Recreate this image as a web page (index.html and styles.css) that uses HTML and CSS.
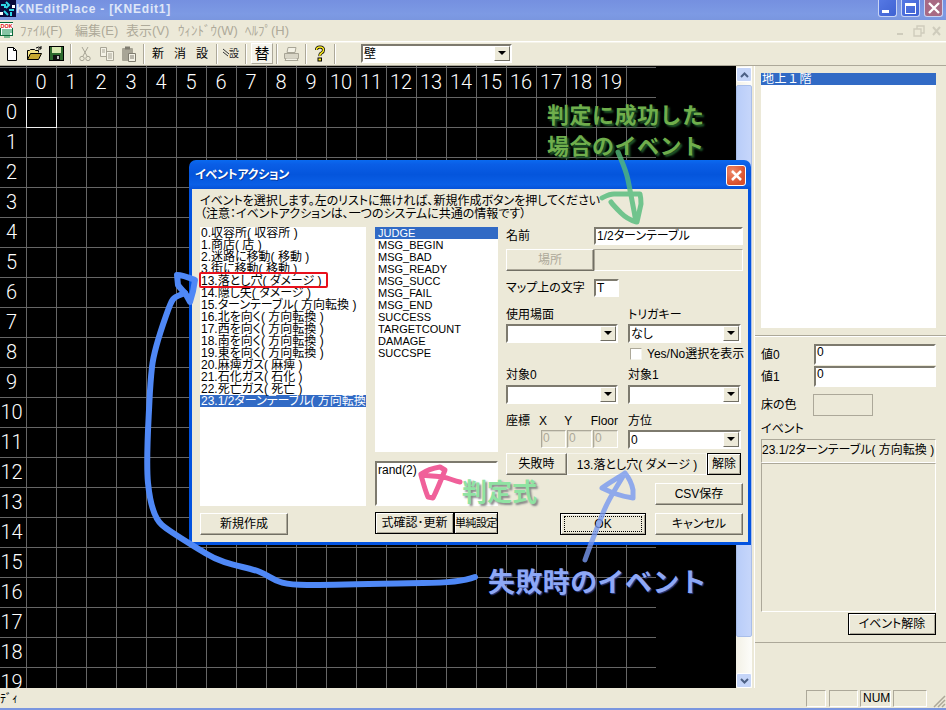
FILE: index.html
```html
<!DOCTYPE html>
<html lang="ja">

<head>
    <meta charset="UTF-8">
    <title>KNEditPlace - [KNEdit1]</title>
    <link rel="stylesheet" href="styles.css">
</head>

<body>

    <div class="app">

        <div class="titlebar">
            <svg class="app-icon" width="16" height="17" viewBox="0 0 16 17">
                <rect width="16" height="17" fill="#0a0a3c"/>
                <path d="M1 5h4v3M6 2l3 3-3 3M9 10h5M4 11l4 4M11 12v4" stroke="#2fd8e8" stroke-width="2" fill="none"/>
                <rect x="0" y="12" width="3" height="3" fill="#fff"/>
                <rect x="12" y="5" width="3" height="3" fill="#fff"/>
            </svg>
            <span class="title-text">KNEditPlace - [KNEdit1]</span>
            <div class="win-btns">
                <div class="win-btn"><span class="glyph-min"></span></div>
                <div class="win-btn"><span class="glyph-max"></span></div>
                <div class="win-btn win-close">
                    <svg width="14" height="14" viewBox="0 0 14 14"><path d="M2 2l10 10M12 2L2 12" stroke="#fff" stroke-width="2.4"/></svg>
                </div>
            </div>
        </div>

        <div class="menubar">
            <svg class="doc-icon" width="14" height="17" viewBox="0 0 14 17">
                <rect x="0.5" y="0.5" width="12" height="13" fill="#fff" stroke="#0a6a3a"/>
                <rect x="0" y="1" width="13" height="5" fill="#fff"/>
                <text x="0.5" y="6" font-size="5.5" font-weight="700" font-family="Liberation Sans" fill="#e01010">DOK</text>
                <path d="M2 8h10M2 10h10M2 12h8M4 15h6" stroke="#0a8a4a"/>
            </svg>
            <span class="menu-item m1">ﾌｧｲﾙ(F)</span>
            <span class="menu-item m2">編集(E)</span>
            <span class="menu-item m3">表示(V)</span>
            <span class="menu-item m4">ｳｨﾝﾄﾞｳ(W)</span>
            <span class="menu-item m5">ﾍﾙﾌﾟ(H)</span>
            <div class="mdi-btns">
                <svg width="50" height="16" viewBox="0 0 50 16">
                    <path d="M4 11h6" stroke="#cfccbc" stroke-width="2"/>
                    <path d="M21 6h7v7h-7zM24 6V3h7v7h-3" stroke="#cfccbc" stroke-width="1.4" fill="none"/>
                    <path d="M40 4l7 8M47 4l-7 8" stroke="#cfccbc" stroke-width="2"/>
                </svg>
            </div>
        </div>

        <div class="toolbar">
            <div class="tool">
                <svg width="16" height="16" viewBox="0 0 16 16"><path d="M3.5 1.5h6l3 3v10h-9z" fill="#fff" stroke="#000"/><path d="M9.5 1.5v3h3" fill="none" stroke="#000"/></svg>
            </div>
            <div class="tool">
                <svg width="17" height="16" viewBox="0 0 17 16"><path d="M1.5 13.5v-9h2l1-1h4l1 1h3v2" fill="#f4e48a" stroke="#000"/><path d="M1.5 13.5l3-6h11l-3 6z" fill="#c8a830" stroke="#000"/><path d="M10 2q3-2 5 0M15 0v3h-3" fill="none" stroke="#000"/></svg>
            </div>
            <div class="tool">
                <svg width="15" height="15" viewBox="0 0 15 15"><rect x="0.5" y="0.5" width="14" height="14" fill="#2e6a2e" stroke="#000"/><rect x="3" y="1" width="9" height="6" fill="#d8e8b0"/><rect x="4" y="9" width="7" height="5" fill="#111"/><rect x="8" y="10" width="2" height="3" fill="#bbb"/></svg>
            </div>
            <div class="tool-sep"></div>
            <div class="tool">
                <svg width="12" height="16" viewBox="0 0 12 16"><path d="M3 1l5 9M9 1l-5 9" stroke="#a8a596" fill="none"/><circle cx="3" cy="12.5" r="2.2" fill="none" stroke="#a8a596"/><circle cx="9" cy="12.5" r="2.2" fill="none" stroke="#a8a596"/></svg>
            </div>
            <div class="tool">
                <svg width="16" height="15" viewBox="0 0 16 15"><path d="M1.5 1.5h6v9h-6zM7.5 5.5h7v9h-7z" fill="#f4f2e6" stroke="#a8a596"/><path d="M3 4h3M3 6h3M9 8h4M9 10h4M9 12h4" stroke="#a8a596"/></svg>
            </div>
            <div class="tool">
                <svg width="16" height="16" viewBox="0 0 16 16"><rect x="1" y="2" width="11" height="13" rx="1" fill="#a8a596"/><rect x="4" y="0.5" width="5" height="3" fill="#807d70"/><path d="M7.5 7.5h7v8h-7z" fill="#f4f2e6" stroke="#807d70"/><path d="M9 10h4M9 12h4" stroke="#807d70"/></svg>
            </div>
            <div class="tool-sep"></div>
            <div class="tool">新</div>
            <div class="tool">消</div>
            <div class="tool">設</div>
            <div class="tool-sep"></div>
            <div class="tool tool-config">
                <svg width="6" height="12" viewBox="0 0 6 12"><path d="M0 1l6 5M0 4l5 4" stroke="#333"/></svg>
                <span>設</span>
            </div>
            <div class="tool-sep"></div>
            <div class="tool tool-on">替</div>
            <div class="tool-sep"></div>
            <div class="tool">
                <svg width="17" height="16" viewBox="0 0 17 16"><path d="M5 1.5h8l-1 5H4z" fill="#f4f2e6" stroke="#a8a596"/><path d="M1.5 7.5h14v5h-14z" fill="#d8d5c6" stroke="#a8a596"/><path d="M3 12.5l-1 2h13l-1-2" fill="#f4f2e6" stroke="#a8a596"/></svg>
            </div>
            <div class="tool-sep"></div>
            <div class="tool">
                <svg width="12" height="17" viewBox="0 0 12 17"><path d="M2.5 5q0-3 3.500-3t3.500 3q0 2-2 3t-1.500 3" fill="none" stroke="#000" stroke-width="3"/><path d="M2.500 5q0-3 3.500-3t3.500 3q0 2-2 3t-1.500 3" fill="none" stroke="#f8e820" stroke-width="1.500"/><rect x="4" y="13" width="3.500" height="3" fill="#f8e820" stroke="#000"/></svg>
            </div>
            <div class="tool-sep"></div>
            <div class="combo tool-combo">
                <span class="combo-text">壁</span>
                <span class="combo-arrow"></span>
            </div>
        </div>

        <div class="main">
            <div class="map">
                <div class="map-rows">
                    <span>0</span><span>1</span><span>2</span><span>3</span><span>4</span>
                    <span>5</span><span>6</span><span>7</span><span>8</span><span>9</span>
                    <span>10</span><span>11</span><span>12</span><span>13</span><span>14</span>
                    <span>15</span><span>16</span><span>17</span><span>18</span><span>19</span>
                </div>
                <div class="map-grid">
                    <div class="map-cols">
                        <span>0</span><span>1</span><span>2</span><span>3</span><span>4</span>
                        <span>5</span><span>6</span><span>7</span><span>8</span><span>9</span>
                        <span>10</span><span>11</span><span>12</span><span>13</span><span>14</span>
                        <span>15</span><span>16</span><span>17</span><span>18</span><span>19</span>
                    </div>
                    <div class="map-cursor"></div>
                </div>
            </div>

            <div class="scroll">
                <div class="scroll-btn">
                    <svg width="9" height="6" viewBox="0 0 9 6"><path d="M1 5l3.500-3.500L8 5" fill="none" stroke="#4d6185" stroke-width="2"/></svg>
                </div>
                <div class="scroll-thumb"></div>
                <div class="scroll-track"></div>
                <div class="scroll-btn">
                    <svg width="9" height="6" viewBox="0 0 9 6"><path d="M1 1l3.500 3.500L8 1" fill="none" stroke="#4d6185" stroke-width="2"/></svg>
                </div>
            </div>

            <div class="side">
                <div class="side-top">
                    <div class="list floor-list">
                        <div class="sel">地上１階</div>
                    </div>
                </div>
                <div class="side-bottom">
                    <div class="value-row"><label>値0</label><div class="field value-field">0</div></div>
                    <div class="value-row"><label>値1</label><div class="field value-field">0</div></div>
                    <div class="floor-row"><label>床の色</label><div class="swatch"></div></div>
                    <div class="event-title">イベント</div>
                    <div class="flat-box event-name">23.1/2ターンテーブル( 方向転換 )</div>
                    <div class="flat-box event-body"></div>
                    <div class="event-actions"><div class="btn btn-black event-clear">イベント解除</div></div>
                </div>
            </div>
        </div>

        <div class="statusbar">
            <span class="status-text">ﾃﾞｨ</span>
            <div class="status-cell s1"></div>
            <div class="status-cell s2"></div>
            <div class="status-cell s3">NUM</div>
            <div class="status-cell s4"></div>
            <svg class="grip" width="14" height="14" viewBox="0 0 14 14"><path d="M13 2L2 13M13 6l-7 7M13 10l-3 3" stroke="#aca899" stroke-width="1.500"/></svg>
        </div>
        <div class="bottom-line"></div>

    </div>

    <div class="dialog">
        <div class="dlg-title">
            <span>イベントアクション</span>
            <div class="dlg-close">
                <svg width="13" height="13" viewBox="0 0 13 13"><path d="M2 2l9 9M11 2l-9 9" stroke="#fff" stroke-width="2.500"/></svg>
            </div>
        </div>
        <div class="dlg-body">
            <p class="dlg-note">イベントを選択します。左のリストに無ければ、新規作成ボタンを押してください<br>（注意：イベントアクションは、一つのシステムに共通の情報です）</p>
            <div class="dlg-cols">
                <div class="col-left">
                    <div class="list event-list">
                        <div>0.収容所( 収容所 )</div>
                        <div>1.商店( 店 )</div>
                        <div>2.迷路に移動( 移動 )</div>
                        <div>3.街に移動( 移動 )</div>
                        <div>13.落とし穴( ダメージ )</div>
                        <div>14.隠し矢( ダメージ )</div>
                        <div>15.ターンテーブル( 方向転換 )</div>
                        <div>16.北を向く( 方向転換 )</div>
                        <div>17.西を向く( 方向転換 )</div>
                        <div>18.南を向く( 方向転換 )</div>
                        <div>19.東を向く( 方向転換 )</div>
                        <div>20.麻痺ガス( 麻痺 )</div>
                        <div>21.石化ガス( 石化 )</div>
                        <div>22.死亡ガス( 死亡 )</div>
                        <div class="sel">23.1/2ターンテーブル( 方向転換 )</div>
                    </div>
                    <div class="btn new-btn">新規作成</div>
                </div>

                <div class="col-mid">
                    <div class="list msg-list">
                        <div class="sel">JUDGE</div>
                        <div>MSG_BEGIN</div>
                        <div>MSG_BAD</div>
                        <div>MSG_READY</div>
                        <div>MSG_SUCC</div>
                        <div>MSG_FAIL</div>
                        <div>MSG_END</div>
                        <div>SUCCESS</div>
                        <div>TARGETCOUNT</div>
                        <div>DAMAGE</div>
                        <div>SUCCSPE</div>
                    </div>
                    <div class="field formula">rand(2)</div>
                    <div class="mid-btns">
                        <div class="btn btn-black check-btn">式確認･更新</div>
                        <div class="btn btn-black simple-btn">単純設定</div>
                    </div>
                </div>

                <div class="col-form">
                    <div class="name-row">
                        <label>名前</label>
                        <div class="field name-field">1/2ターンテーブル</div>
                    </div>
                    <div class="place-row">
                        <div class="btn btn-off place-btn">場所</div>
                        <div class="flat-box place-field"></div>
                    </div>
                    <div class="mark-row">
                        <label>マップ上の文字</label>
                        <div class="field mark-field">T</div>
                    </div>

                    <div class="pair labels first-labels"><label>使用場面</label><label>トリガキー</label></div>
                    <div class="pair">
                        <div class="combo"><span class="combo-text"></span><span class="combo-arrow"></span></div>
                        <div class="combo"><span class="combo-text">なし</span><span class="combo-arrow"></span></div>
                    </div>
                    <div class="pair check-row">
                        <div></div>
                        <div class="check-wrap"><span class="checkbox"></span><span>Yes/No選択を表示</span></div>
                    </div>
                    <div class="pair labels target-labels"><label>対象0</label><label>対象1</label></div>
                    <div class="pair">
                        <div class="combo"><span class="combo-text"></span><span class="combo-arrow"></span></div>
                        <div class="combo"><span class="combo-text"></span><span class="combo-arrow"></span></div>
                    </div>

                    <div class="pair labels coord-labels">
                        <div class="coord-names"><label class="c0">座標</label><label class="c1">X</label><label class="c2">Y</label><label class="c3">Floor</label></div>
                        <label>方位</label>
                    </div>
                    <div class="pair">
                        <div class="coords">
                            <div class="field field-off">0</div>
                            <div class="field field-off">0</div>
                            <div class="field field-off">0</div>
                        </div>
                        <div class="combo"><span class="combo-text">0</span><span class="combo-arrow"></span></div>
                    </div>

                    <div class="fail-row">
                        <div class="btn fail-btn">失敗時</div>
                        <div class="fail-name">13.落とし穴( ダメージ )</div>
                        <div class="btn btn-black clear-btn">解除</div>
                    </div>
                    <div class="csv-row"><div class="btn dlg-btn">CSV保存</div></div>
                    <div class="ok-row">
                        <div class="btn btn-black ok-btn"><span>OK</span></div>
                        <div class="btn dlg-btn">キャンセル</div>
                    </div>
                </div>
            </div>
        </div>
    </div>

    <!-- 手書きの注釈 -->
    <div class="notes">
        <svg width="946" height="710" viewBox="0 0 946 710">
            <rect x="200" y="273" width="127" height="14" rx="1" fill="none" stroke="#e8101c" stroke-width="2"/>
            <g fill="none" stroke-linecap="round" stroke-linejoin="round">
                <path class="ink-green" d="M618 152C622 162 626 170 628 180S633 205 636 222C630 220 626 218 621 213S613 205 611 202M602 198C606 196 609 194 614 194L640 194C641 198 641 200 641 204L637 222"/>
                <path class="ink-pink" d="M421 474C427 470 434 468 440 467L445 470C441 480 437 490 433 498L428 497C425 490 423 482 421 475C430 476 437 476 443 477S454 481 460 482"/>
                <path class="ink-blue" d="M475 577C462 582 440 583 423 583S340 585 307 585S275 578 260 572S226 566 205 553S170 532 162 525S150 503 148 483S148 430 149 410S150 385 152 367S161 330 167 313S173 298 185 293"/>
                <path class="ink-blue" d="M177 275C183 275 190 278 195 280C194 288 192 296 190 302C188 298 187 296 185 293C182 290 180 288 178 285Z"/>
                <path class="ink-light" d="M585 560C591 543 597 528 603 513S612 495 625 473M602 488C610 482 618 478 625 473C629 478 632 484 633 490L633 498C626 497 619 495 613 493Z"/>
            </g>
        </svg>
        <div class="note note-success">判定に成功した<br>場合のイベント</div>
        <div class="note note-formula">判定式</div>
        <div class="note note-fail">失敗時のイベント</div>
    </div>

</body>

</html>
```

FILE: styles.css
```css
* {
    box-sizing: border-box;
}

body {
    margin: 0;
    width: 946px;
    height: 710px;
    overflow: hidden;
    position: relative;
    background-color: #ece9d8;
    color: #000;
    font-family: "Liberation Sans", "Noto Sans CJK JP", sans-serif;
    font-size: 12px;
    line-height: 12px;
    font-feature-settings: "palt";
}

label {
    display: block;
    white-space: nowrap;
}

.app {
    display: flex;
    flex-direction: column;
    height: 710px;
}

/* タイトルバー */
.titlebar {
    display: flex;
    align-items: flex-start;
    height: 20px;
    background: linear-gradient(#7590e0, #7d9ae4 70%, #7a96df);
}

.app-icon {
    flex: none;
}

.title-text {
    margin: 2px 0 0 0;
    color: #dfe6f8;
    font-size: 12px;
    line-height: 14px;
    font-weight: 700;
    letter-spacing: 0.8px;
}

.win-btns {
    display: flex;
    gap: 4px;
    margin-left: auto;
    margin-right: 3px;
}

.win-btn {
    display: flex;
    align-items: center;
    justify-content: center;
    width: 19px;
    height: 17px;
    border: 1px solid #c8d4f4;
    border-top: none;
    border-radius: 0 0 3px 3px;
    background: linear-gradient(135deg, #5578e4, #3f62d2);
    position: relative;
}

.win-close {
    background: #a86a84;
}

.glyph-min {
    width: 7px;
    height: 3px;
    background: #fff;
    margin: 7px 4px 0 0;
}

.glyph-max {
    width: 11px;
    height: 11px;
    border: 1px solid #fff;
    border-top-width: 3px;
}

/* メニュー */
.menubar {
    display: flex;
    align-items: center;
    height: 21px;
    position: relative;
}

.doc-icon {
    flex: none;
}

.menu-item {
    color: #aeaa9a;
    font-size: 13px;
    white-space: nowrap;
    flex: none;
}

.m1 { margin-left: 6px; width: 55px; }
.m2 { width: 51px; }
.m3 { width: 52px; }
.m4 { width: 67px; }
.m5 { width: 40px; }

.mdi-btns {
    margin-left: auto;
    margin-right: 3px;
    height: 16px;
}

/* ツールバー */
.toolbar {
    display: flex;
    align-items: center;
    height: 25px;
    padding-left: 1px;
    border-top: 1px solid #fff;
    border-bottom: 1px solid #aca899;
    box-shadow: inset 0 1px 0 #f5f3e8;
    background: #ece9d8;
    font-size: 12px;
}

.tool {
    display: flex;
    align-items: center;
    justify-content: center;
    flex: none;
    width: 22px;
    height: 21px;
}

.tool-sep {
    flex: none;
    width: 2px;
    height: 20px;
    margin: 0 2px 0 3px;
    border-left: 1px solid #aca899;
    border-right: 1px solid #fff;
}

.tool-config {
    font-size: 10px;
    color: #222;
}

.tool-on {
    margin-left: 2px;
    border: 1px solid #fff;
    border-right-color: #aca899;
    border-bottom-color: #aca899;
    background: #f5f4ec;
    font-size: 15px;
}

.tool-combo {
    width: 151px;
    margin-left: 23px;
}

/* コンボボックス */
.combo {
    display: flex;
    align-items: center;
    height: 19px;
    background: #fff;
    border: 2px solid;
    border-color: #7d7a6e #fff #fff #7d7a6e;
    outline: 0;
}

.combo-text {
    flex: 1;
    padding-left: 1px;
    white-space: nowrap;
}

.combo-arrow {
    flex: none;
    width: 16px;
    height: 15px;
    background: #ece9d8;
    border: 1px solid;
    border-color: #fff #716f64 #716f64 #fff;
    position: relative;
}

.combo-arrow::after {
    content: "";
    position: absolute;
    left: 3px;
    top: 4px;
    border: 4px solid transparent;
    border-top: 4px solid #000;
    border-bottom: 0;
}

/* マップ */
.main {
    display: flex;
    height: 622px;
}

.map {
    display: flex;
    width: 736px;
    flex: none;
    overflow: hidden;
    background-color: #000;
    background-image: linear-gradient(#666, #666 1px, transparent 1px);
    background-size: 656px 30px;
    background-position: 0 1px;
    background-repeat: repeat-y;
    color: #fff;
    font-family: Roboto, "Liberation Sans", sans-serif;
    font-weight: 300;
    font-size: 20px;
    line-height: 30px;
}

.map-rows {
    display: flex;
    flex-direction: column;
    flex: none;
    width: 26px;
    padding-top: 31px;
    text-align: center;
}

.map-rows span {
    display: block;
    height: 30px;
    width: 23px;
}

.map-grid {
    width: 601px;
    height: 622px;
    flex: none;
    background-image: linear-gradient(to right, #666, #666 1px, transparent 1px);
    background-size: 30px 100%;
}

.map-cols {
    display: flex;
    height: 31px;
    padding-top: 1px;
}

.map-cols span {
    width: 30px;
    text-align: center;
    flex: none;
}

.map-cursor {
    width: 31px;
    height: 31px;
    border: 1px solid #eee;
}

/* スクロールバー */
.scroll {
    display: flex;
    flex-direction: column;
    flex: none;
    width: 16px;
    background: linear-gradient(to right, #f3f1e6, #fdfdfa);
    padding-top: 1px;
}

.scroll-btn {
    display: flex;
    align-items: center;
    justify-content: center;
    height: 15px;
    flex: none;
    background: #c5d5f8;
    border: 1px solid #fff;
    border-radius: 2px;
}

.scroll-thumb {
    height: 552px;
    margin-top: 3px;
    flex: none;
    background: linear-gradient(to right, #b9cdf9, #c6d6fb);
    border: 1px solid #a9bee9;
    border-radius: 2px;
}

.scroll-track {
    flex: 1;
}

/* 右パネル */
.side {
    display: flex;
    flex-direction: column;
    flex: 1;
    margin-left: 2px;
    border-left: 1px solid #fff;
}

.side-top {
    height: 270px;
    padding: 7px 0 0 6px;
    border-bottom: 1px solid #aca899;
}

.list {
    background: #fff;
    overflow: hidden;
    white-space: nowrap;
}

.list .sel {
    background: #316ac5;
    color: #fff;
}

.list div {
    height: 12px;
    padding-left: 1px;
}

.floor-list {
    width: 175px;
    height: 255px;
    font-feature-settings: normal;
    letter-spacing: 0.5px;
}

.side-bottom {
    height: 307px;
    padding: 7px 0 0 6px;
    border-top: 1px solid #fff;
    border-bottom: 1px solid #aca899;
}

.value-row {
    display: flex;
    align-items: center;
    margin-bottom: 1px;
}

.value-row label {
    width: 53px;
}

.field {
    background: #fff;
    border: 2px solid;
    border-color: #7d7a6e #fff #fff #7d7a6e;
    white-space: nowrap;
}

.value-field {
    width: 122px;
    height: 21px;
    padding-left: 1px;
}

.floor-row {
    display: flex;
    align-items: center;
    margin-top: 7px;
}

.floor-row label {
    width: 52px;
}

.swatch {
    width: 60px;
    height: 22px;
    border: 1px solid #aca899;
}

.event-title {
    margin-top: 7px;
}

.flat-box {
    border: 1px solid;
    border-color: #aca899 #fff #fff #aca899;
}

.event-name {
    width: 175px;
    height: 24px;
    margin-top: 4px;
    line-height: 20px;
    white-space: nowrap;
    overflow: hidden;
}

.event-body {
    width: 175px;
    height: 149px;
}

.event-actions {
    display: flex;
    justify-content: flex-end;
    width: 175px;
    margin-top: 1px;
}

.event-clear {
    width: 88px;
    height: 23px;
}

/* ボタン */
.btn {
    display: flex;
    align-items: center;
    justify-content: center;
    flex: none;
    height: 22px;
    white-space: nowrap;
    background: #ece9d8;
    border: 1px solid;
    border-color: #fff #716f64 #716f64 #fff;
    box-shadow: inset -1px -1px 0 #aca899;
}

.btn-black {
    border-color: #000;
    box-shadow: inset 1px 1px 0 #fff, inset -1px -1px 0 #aca899;
}

.btn-off {
    color: #aca899;
}

/* ステータスバー */
.statusbar {
    display: flex;
    align-items: flex-end;
    height: 20px;
    position: relative;
    padding-top: 1px;
}

.status-text {
    position: absolute;
    left: 0;
    top: 5px;
}

.status-cell {
    height: 17px;
    border: 1px solid;
    border-color: #aca899 #fff #fff #aca899;
    line-height: 15px;
    padding-left: 2px;
    margin-bottom: 1px;
    flex: none;
}

.s1 { width: 20px; margin-left: 806px; }
.s2 { width: 29px; margin-left: 3px; }
.s3 { width: 31px; margin-left: 2px; }
.s4 { width: 34px; margin-left: 2px; }

.grip {
    margin-left: auto;
    flex: none;
}

.bottom-line {
    height: 2px;
    background: #7a96df;
}

/* ダイアログ */
.dialog {
    position: absolute;
    left: 189px;
    top: 160px;
    width: 562px;
    height: 385px;
    display: flex;
    flex-direction: column;
}

.dlg-title {
    display: flex;
    align-items: center;
    height: 29px;
    padding: 1px 5px 0 6px;
    border-radius: 7px 7px 0 0;
    background: linear-gradient(#0a6af0, #0a5ee6 15%, #0455dc 50%, #0a5fe6 85%, #0652d8);
    color: #fff;
    font-size: 12px;
    font-weight: 700;
    letter-spacing: -0.3px;
    text-shadow: 1px 1px 0 #0a3ca0;
}

.dlg-close {
    display: flex;
    align-items: center;
    justify-content: center;
    width: 20px;
    height: 21px;
    margin-left: auto;
    border: 1px solid #fff;
    border-radius: 3px;
    background: radial-gradient(circle at 30% 30%, #ee8a6a, #d8502c 70%);
}

.dlg-body {
    flex: 1;
    background: #ece9d8;
    border: 3px solid #0353e0;
    border-top: none;
    padding: 6px 8px 0 8px;
}

.dlg-note {
    margin: 0 0 6px 0;
    height: 26px;
    line-height: 13px;
    white-space: nowrap;
}

.dlg-cols {
    display: flex;
}

.col-left {
    width: 166px;
    flex: none;
}

.event-list {
    height: 279px;
}

.new-btn {
    width: 88px;
    margin-top: 7px;
}

.col-mid {
    width: 123px;
    margin-left: 9px;
    flex: none;
}

.msg-list {
    height: 225px;
    font-size: 11px;
}

.msg-list div {
    padding-left: 3px;
}

.formula {
    height: 45px;
    margin-top: 9px;
    padding: 1px;
}

.mid-btns {
    display: flex;
    margin-top: 6px;
}

.check-btn {
    width: 79px;
}

.simple-btn {
    width: 44px;
    font-size: 11px;
    letter-spacing: -0.5px;
    overflow: hidden;
}

.col-form {
    width: 237px;
    margin-left: 8px;
    flex: none;
}

.name-row,
.mark-row {
    display: flex;
    align-items: center;
}

.name-row label,
.mark-row label {
    width: 88px;
}

.name-field {
    width: 149px;
    height: 18px;
    padding-left: 1px;
    line-height: 14px;
}

.place-row {
    display: flex;
    margin-top: 4px;
}

.place-btn {
    width: 88px;
}

.place-field {
    width: 149px;
    height: 22px;
}

.mark-row {
    margin-top: 8px;
}

.mark-field {
    width: 25px;
    height: 18px;
    padding-left: 1px;
    line-height: 14px;
}

.pair {
    display: grid;
    grid-template-columns: 112px 113px;
    column-gap: 10px;
}

.first-labels {
    margin-top: 12px;
    margin-bottom: 3px;
}

.check-row {
    margin-top: 5px;
}

.check-wrap {
    display: flex;
    align-items: center;
    white-space: nowrap;
    padding-left: 2px;
    gap: 5px;
}

.checkbox {
    width: 12px;
    height: 12px;
    background: #fff;
    border: 1px solid;
    border-color: #aca899 #f5f4ec #f5f4ec #aca899;
    flex: none;
}

.target-labels {
    margin-top: 9px;
    margin-bottom: 4px;
}

.coord-labels {
    margin-top: 11px;
    margin-bottom: 3px;
}

.coord-names {
    display: flex;
}

.c0 { width: 35px; }
.c1 { width: 27px; }
.c2 { width: 28px; }

.coords {
    display: flex;
    gap: 1px;
    margin-left: 35px;
}

.field-off {
    width: 25px;
    height: 18px;
    padding-left: 1px;
    color: #aca899;
    background: #ece9d8;
    border-width: 1px;
    border-color: #aca899 #fff #fff #aca899;
    box-shadow: inset 1px 1px 0 #d8d5c6;
    line-height: 15px;
}

.fail-row {
    display: flex;
    margin-top: 4px;
}

.fail-btn {
    width: 61px;
}

.fail-name {
    width: 140px;
    height: 22px;
    line-height: 22px;
    text-align: center;
    white-space: nowrap;
    border: 1px solid;
    border-color: #f5f4ec #fff #fff #f5f4ec;
}

.clear-btn {
    width: 34px;
}

.csv-row {
    display: flex;
    justify-content: flex-end;
    margin-top: 8px;
}

.dlg-btn {
    width: 88px;
}

.ok-row {
    display: flex;
    justify-content: flex-end;
    gap: 9px;
    margin-top: 8px;
}

.ok-btn {
    width: 86px;
}

.ok-btn span {
    display: block;
    width: 78px;
    height: 16px;
    line-height: 14px;
    text-align: center;
    border: 1px dotted #000;
}

/* 注釈 */
.notes {
    position: absolute;
    left: 0;
    top: 0;
    width: 946px;
    height: 710px;
    pointer-events: none;
}

.notes svg {
    display: block;
}

.ink-green {
    stroke: rgba(82, 186, 122, 0.8);
    stroke-width: 5;
}

.ink-pink {
    stroke: #f0609a;
    stroke-width: 5;
}

.ink-blue {
    stroke: #4f88f6;
    stroke-width: 6;
}

.ink-light {
    stroke: rgba(120, 152, 240, 0.8);
    stroke-width: 5;
}

.note {
    position: absolute;
    font-family: "Noto Sans CJK JP", sans-serif;
    font-weight: 700;
    white-space: nowrap;
}

.note-success {
    left: 547px;
    top: 98px;
    font-size: 22px;
    line-height: 31px;
    letter-spacing: 0.5px;
    color: #6fae4c;
    text-shadow: 2px 2px 2px #1f5a2a;
    font-feature-settings: normal;
}

.note-formula {
    left: 462px;
    top: 475px;
    font-size: 25px;
    line-height: 30px;
    color: #8fe3a2;
    text-shadow: 2px 2px 2px #888;
    font-feature-settings: normal;
}

.note-fail {
    left: 488px;
    top: 565px;
    font-size: 27px;
    line-height: 32px;
    letter-spacing: 0.4px;
    color: #8ea8f6;
    text-shadow: 1px 1px 1px #2a3a80;
    font-feature-settings: normal;
}
```
